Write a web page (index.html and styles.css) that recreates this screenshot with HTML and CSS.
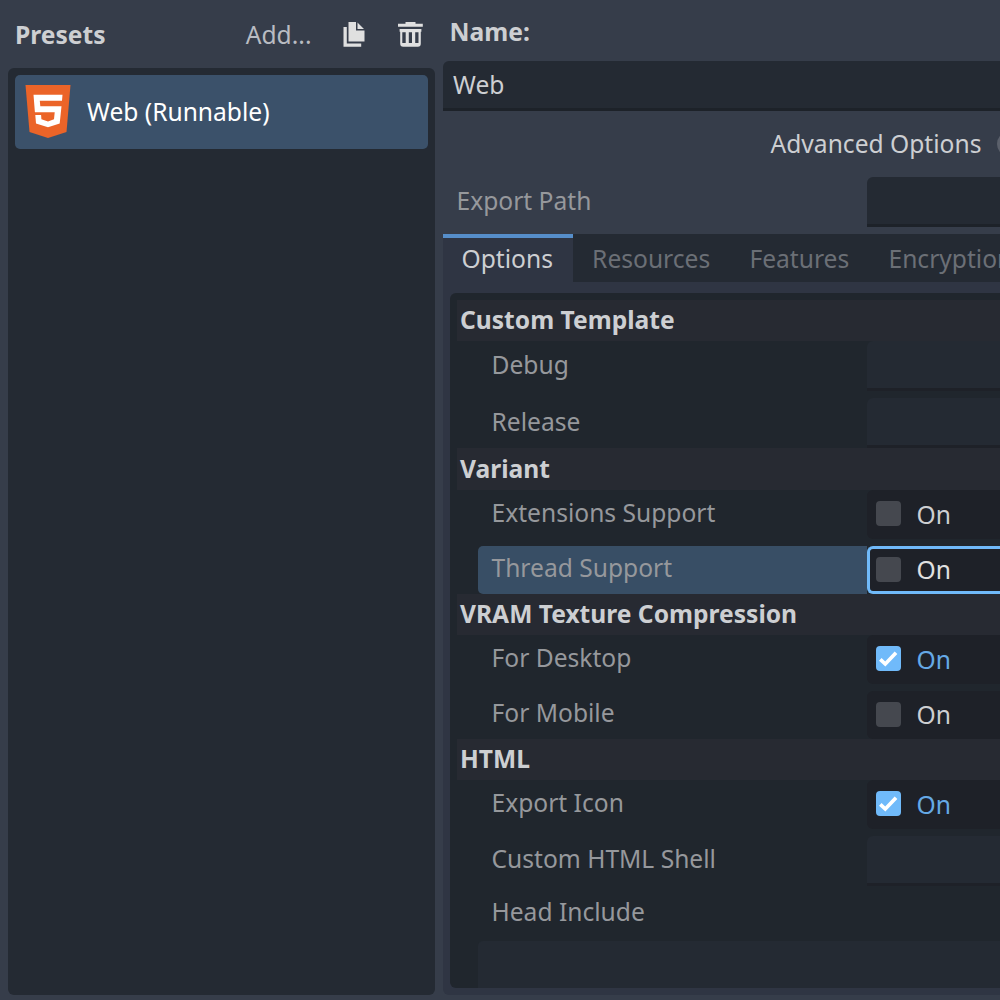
FILE: index.html
```
<!DOCTYPE html>
<html lang="en">
<head>
<meta charset="utf-8">
<title>Export</title>
<link rel="stylesheet" href="styles.css">
</head>
<body>
<div class="dialog">
  <aside class="presets">
    <div class="presets-bar">
      <h2 class="title">Presets</h2>
      <span class="add">Add...</span>
      <svg class="icon copy" viewBox="0 0 22 25" width="22" height="25"><path fill="#e0e0e0" d="M5.500 0H13V8.500H21.500V19.500H5.500ZM14.500 0.500L21 7H14.500ZM0.500 5H3.800V21.500H18.200V24.700H0.500Z"/></svg>
      <svg class="icon trash" viewBox="0 0 25 25" width="25" height="25"><path fill="#e0e0e0" fill-rule="evenodd" d="M7.500 0H17.500V1.700H24.800V4.800H0V1.700H7.500ZM1.600 7H23.400V9.800H22.800V21.500Q22.800 24.800 19.800 24.800H5.200Q2.200 24.800 2.200 21.500V9.800H1.600ZM4.300 10.200V21H7.700V10.200ZM10.800 10.200V21H14V10.200ZM17.200 10.200V21H20.500V10.200Z"/></svg>
    </div>
    <div class="preset-list">
      <div class="preset">
        <svg class="html5" viewBox="0 0 46 53" width="46" height="53"><path fill="#eb6428" d="M0.500 0H45.500L41.500 47L23 53L4.500 47Z"/><path fill="#fff" d="M8.500 9.700H37.500L37 15.700H14.800L15.300 21.300H36.500L34.700 38.500L23 42.300L11 38.500L10.300 30H16.100L16.400 34.300L23 36.500L29 34.300L29.700 27.200H9.900Z"/></svg>
        <span>Web (Runnable)</span>
      </div>
    </div>
  </aside>
  <main class="settings">
    <h2 class="title name-title">Name:</h2>
    <div class="field name-field">Web</div>
    <div class="advanced"><span>Advanced Options</span><i class="switch"></i></div>
    <div class="path-row"><span class="path-label">Export Path</span><div class="field path-field"></div></div>
    <nav class="tabs">
      <span class="tab active">Options</span><span class="tab">Resources</span><span class="tab">Features</span><span class="tab">Encryption</span>
    </nav>
    <div class="tab-page">
      <div class="inspector">
        <h3 class="section">Custom Template</h3>
        <div class="row text"><span class="label">Debug</span><div class="value"></div></div>
        <div class="row text last"><span class="label">Release</span><div class="value"></div></div>
        <h3 class="section wide">Variant</h3>
        <div class="row"><span class="label">Extensions Support</span><div class="value check"><i class="box"></i><span>On</span></div></div>
        <div class="row selected"><span class="label">Thread Support</span><div class="value check"><i class="box"></i><span>On</span></div></div>
        <h3 class="section">VRAM Texture Compression</h3>
        <div class="row"><span class="label">For Desktop</span><div class="value check on"><i class="box"><svg viewBox="0 0 25 25" width="25" height="25"><path d="M4.300 13.300L9.300 18L20 6.800" fill="none" stroke="#fff" stroke-width="3.700"/></svg></i><span>On</span></div></div>
        <div class="row last"><span class="label">For Mobile</span><div class="value check"><i class="box"></i><span>On</span></div></div>
        <h3 class="section">HTML</h3>
        <div class="row"><span class="label">Export Icon</span><div class="value check on"><i class="box"><svg viewBox="0 0 25 25" width="25" height="25"><path d="M4.300 13.300L9.300 18L20 6.800" fill="none" stroke="#fff" stroke-width="3.700"/></svg></i><span>On</span></div></div>
        <div class="row text last"><span class="label">Custom HTML Shell</span><div class="value"></div></div>
        <div class="head-label">Head Include</div>
        <div class="head-area"></div>
      </div>
    </div>
  </main>
</div>
</body>
</html>
```
FILE: styles.css
```
* { box-sizing: border-box; }
body {
  margin: 0;
  width: 1000px;
  height: 1000px;
  overflow: hidden;
  background: #363d4a;
  color: #cdcfd2;
  font: 24.600px/34px "Noto Sans", sans-serif;
  white-space: nowrap;
}
.dialog {
  display: grid;
  grid-template-columns: 427px minmax(0, 1fr);
  column-gap: 7.500px;
  height: 1000px;
  padding: 0 0 5px 8px;
  overflow: hidden;
}
.title, .section { margin: 0; font-size: 24.600px; font-weight: 700; }
.presets { display: flex; flex-direction: column; }
.presets-bar { display: flex; align-items: center; height: 68px; padding: 0 12px 0 7px; }
.presets-bar .title, .presets-bar .add { padding-top: 2px; }
.add { margin-left: auto; color: #b9bcc2; }
.icon { display: block; }
.copy { margin-left: 31.500px; }
.trash { margin-left: 33px; }
.preset-list { flex: 1; padding: 7px 7px 7px 7px; background: #242a33; border-radius: 6px; }
.preset {
  display: flex;
  align-items: center;
  gap: 16px;
  height: 73.500px;
  padding: 0 0 1.500px 10px;
  border-radius: 5px;
  background: #3b516a;
  color: #fff;
}
.preset span { padding-top: 2px; }
.settings { display: flex; flex-direction: column; min-width: 0; }
.name-title { height: 61px; padding: 15px 0 0 7px; }
.field { height: 50px; background: #242a33; border-bottom: 3px solid #1d2229; border-radius: 6px 0 0 0; }
.name-field { padding: 7px 0 0 10.500px; }
.advanced { display: flex; align-items: center; height: 66px; padding: 0 0 1px 328px; gap: 15.500px; }
.switch { flex: none; width: 48px; height: 26px; border-radius: 13px; background: #5b606b; }
.path-row { display: flex; height: 57px; }
.path-label { width: 424.500px; padding: 7px 0 0 14px; color: #96989c; }
.path-field { flex: 1; }
.tabs { display: flex; flex: none; height: 48px; background: #242a33; overflow: hidden; }
.tab { flex: none; padding: 8px 19.600px 0; color: #6b6f76; }
.tab.active { width: 130px; border-top: 4px solid #568eca; padding: 4px 19px 0; background: #2f3543; color: #cdcfd2; }
.tab-page { flex: 1; padding: 11px 0 7px 7px; background: #2f3543; border-radius: 0 0 0 6px; min-height: 0; }
.inspector { height: 695px; padding: 7px 0 0 7px; background: #20262d; border-radius: 6px 0 0 6px; overflow: hidden; }
.section { height: 41px; padding: 3px 0 0 3.500px; background: #272a32; }
.section.wide { height: 42px; padding-top: 4px; }
.row { display: flex; height: 48.500px; margin: 0 0 7px 21px; }
.row.last, .row.selected { margin-bottom: 0; }
.row.text { height: 50px; }
.label { width: 389.500px; padding: 5.800px 0 0 14px; color: #96989c; }
.text .label { padding-top: 6.800px; }
.value { flex: 1; background: #242a33; border-radius: 6px 0 0 6px; }
.text .value { border-bottom: 3px solid #1e2128; border-radius: 6px 0 0 0; }
.check { display: flex; align-items: center; gap: 16px; padding: 0 0 1px 8.500px; background: #1e2128; }
.check span { padding-top: 2px; }
.check.on { color: #65a9e6; }
.box { display: block; width: 25px; height: 25px; border-radius: 4px; background: #45484f; }
.on .box { background: #70bafa; }
.box svg { display: block; }
.selected .label { background: #384e65; border-radius: 5px 0 0 5px; }
.selected .value { border: 3px solid #70bafa; border-right: 0; padding-left: 5.500px; color: #e0e0e0; }
.head-label { padding: 9.300px 0 0 35px; height: 55.500px; color: #96989c; }
.head-area { height: 60px; margin-left: 21px; background: #242a33; border-radius: 5px 0 0 0; }
```
